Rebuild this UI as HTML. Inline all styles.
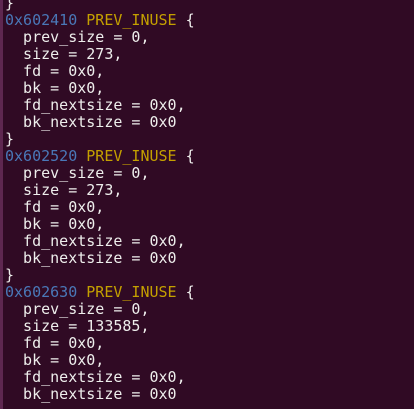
<html><head><style>
body{margin:0;width:414px;height:409px;background:#300a24;overflow:hidden;position:relative}
.s{position:absolute;left:0;top:0;width:3px;height:409px;background:#5e2750}
pre{margin:0;position:absolute;left:5px;top:-5px;font:15px/17px "DejaVu Sans Mono","Liberation Mono",monospace;color:#eeeeec}
.a{color:#4a78b8}.y{color:#c4a000}
</style></head><body><div class="s"></div><pre>}
<span class="a">0x602410</span> <span class="y">PREV_INUSE</span> {
  prev_size = 0,
  size = 273,
  fd = 0x0,
  bk = 0x0,
  fd_nextsize = 0x0,
  bk_nextsize = 0x0
}
<span class="a">0x602520</span> <span class="y">PREV_INUSE</span> {
  prev_size = 0,
  size = 273,
  fd = 0x0,
  bk = 0x0,
  fd_nextsize = 0x0,
  bk_nextsize = 0x0
}
<span class="a">0x602630</span> <span class="y">PREV_INUSE</span> {
  prev_size = 0,
  size = 133585,
  fd = 0x0,
  bk = 0x0,
  fd_nextsize = 0x0,
  bk_nextsize = 0x0</pre></body></html>
